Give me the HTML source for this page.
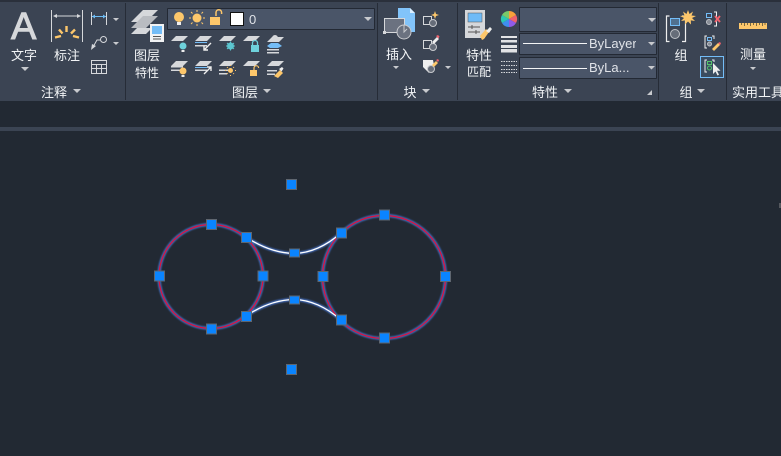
<!DOCTYPE html>
<html><head><meta charset="utf-8">
<style>
html,body{margin:0;padding:0;background:#222933;}
#p{position:relative;width:781px;height:456px;overflow:hidden;background:#222933;font-family:"Liberation Sans","Noto Sans CJK SC",sans-serif;color:#f0f2f5;}
.a{position:absolute;}
.t{position:absolute;font-size:13px;line-height:15px;white-space:nowrap;color:#f2f4f6;}
.c{text-align:center;transform:translateX(-50%);}
.s{position:absolute;width:1px;background:#262c37;}
.dd{position:absolute;background:#4a5568;border:1px solid #232934;box-sizing:border-box;border-radius:1px;}
svg{position:absolute;left:0;top:0;}
</style></head><body><div id="p">
<div class="a" style="left:0;top:0;width:781px;height:2px;background:#2a303b"></div>
<div class="a" style="left:0;top:2px;width:781px;height:99px;background:#3b4453"></div>
<div class="a" style="left:0;top:127px;width:781px;height:4px;background:#3b4453"></div>
<div class="s" style="left:125px;top:3px;height:97px"></div>
<div class="s" style="left:377px;top:3px;height:97px"></div>
<div class="s" style="left:457px;top:3px;height:97px"></div>
<div class="s" style="left:658px;top:3px;height:97px"></div>
<div class="s" style="left:726px;top:3px;height:97px"></div>

<div class="dd" style="left:167px;top:8px;width:208px;height:22px"></div>
<div class="dd" style="left:519px;top:7px;width:138px;height:25px"></div>
<div class="dd" style="left:519px;top:33px;width:138px;height:22px"></div>
<div class="dd" style="left:519px;top:57px;width:138px;height:22px"></div>

<svg width="781" height="456" viewBox="0 0 781 456">
<defs><filter id="b" x="-10%" y="-10%" width="120%" height="120%"><feGaussianBlur stdDeviation="0.7"/></filter></defs>
<!-- annotation icons -->
<g stroke="#d6d8db" stroke-width="1" fill="none"><path d="M51.500 10V42M82.500 10V42M54 16H80"/></g>
<path d="M53 16l4-2v4zM81 16l-4-2v4z" fill="#d6d8db"/>
<g stroke="#fdc76b" stroke-width="2.400" fill="none"><path d="M66.500 26V32M59 29.500L62.500 33.500M75 29.500L71 33.500M55 37.500L61 36M79 37.500L73 36"/></g>
<path d="M91.500 12V25M106.500 12V25" stroke="#d6d8db" fill="none"/><path d="M92 16.500H106" stroke="#6dbdf5" stroke-width="1"/>
<path d="M92 16.500l3-2v4zM106 16.500l-3-2v4z" fill="#6dbdf5"/>
<circle cx="103.500" cy="39.500" r="3" fill="none" stroke="#d6d8db"/><path d="M100 40h-3l-4 7" fill="none" stroke="#d6d8db"/><path d="M91 50l1-6 4 2z" fill="#d6d8db"/>
<path d="M91.500 60.500h15v13h-15zM91.500 64.500h15M91.500 68.500h15M96.500 64.500v9M101.500 64.500v9" fill="none" stroke="#d6d8db"/>
<g fill="#c8cace"><path d="M113 18h6l-3 3zM113 42h6l-3 3zM21 67h8l-4 4zM73 89h8l-4 4z"/></g>
<g fill="#c8cace"><path d="M263 89h8l-4 4zM422 89h8l-4 4zM564 89h8l-4 4zM697 89h8l-4 4zM393 66h6l-3 3zM364 17h8l-4 4zM445 66h6l-3 3zM750 67h6l-3 3zM648 18h8l-4 4zM648 42h7l-3.500 3.500zM648 66h7l-3.500 3.500z"/></g>
<path d="M647 95l5-5v5z" fill="#c8cace"/>
<!-- layer props -->
<g fill="#d6d8db"><path d="M131 22L143 10H158L146 22z"/><path d="M131 28L143 16H158L146 28z" fill="#b9bcc1" /><path d="M131 34L137 28H152L146 34z"/></g>
<rect x="150" y="24" width="14" height="18" fill="#f2f3f4"/><rect x="152" y="26" width="10" height="8" fill="#74bdf7"/>
<path d="M153 36.500h8M153 39h8" stroke="#555" fill="none"/>
<!-- layer combo row -->
<circle cx="179" cy="17" r="5" fill="#fdc76b"/><rect x="177" y="22" width="4" height="3" fill="#eee"/>
<circle cx="197" cy="18" r="4.500" fill="#fdc76b"/><path d="M197 10v2M197 24v2M189 18h2M203 18h2M191 12l1.500 1.500M203 12l-1.500 1.500M191 24l1.500-1.500M203 24l-1.500-1.500" stroke="#fdc76b" fill="none"/>
<rect x="210" y="17" width="10" height="8" fill="#fdc76b"/><path d="M216 16v-3.500a2.800 2.800 0 0 1 5.600 0V14" fill="none" stroke="#fdc76b" stroke-width="1.500"/>
<rect x="230.500" y="12.500" width="13" height="13" fill="#fff" stroke="#111"/>
<!-- layer rows -->
<g fill="#d6d8db">
<path d="M171 41l5-5h12l-5 5z"/><path d="M243 41l5-5h12l-5 5zM219 41l5-5h12l-5 5zM171 66l5-5h12l-5 5zM195 41l5-5h12l-5 5zM219 66l5-5h12l-5 5zM243 66l5-5h12l-5 5zM195 66l5-5h12l-5 5zM267 42l5-5h12l-5 5zM267 66l5-5h12l-5 5z"/>
<path d="M171 66h12v1.500h-12zM171 69.500h9v1.500h-9z"/>
<path d="M195 45h12v1.500h-12zM195 69.500h12v1.500h-12z"/>
<path d="M219 69.500h10v1.500h-10zM219 73h8v1.500h-8z"/>
<path d="M267 49h12v1.500h-12zM267 52h12v1.500h-12zM267 70h10v1.500h-10zM267 73.500h8v1.500h-8z"/>
</g>
<path d="M195 42.500h12M195 67.500h12" stroke="#74bdf7" fill="none"/>
<path d="M267 46l4-3h7l4 3-4 2h-8z" fill="#74bdf7"/>
<circle cx="275" cy="38" r="3" fill="#d6d8db"/>
<circle cx="183" cy="46" r="3.500" fill="#6ed2dc"/><rect x="181.500" y="50" width="3" height="2" fill="#eee"/>
<path d="M211 43l-7 7M204 46v4h4" stroke="#eee" stroke-width="1.400" fill="none"/>
<circle cx="230.500" cy="46" r="3.500" fill="#5cc6d0"/><path d="M226 46h9M230.500 41.500v9M227 43l7 6M234 43l-7 6" stroke="#5cc6d0" fill="none"/>
<rect x="251" y="45" width="8" height="7" fill="#6ed2dc"/><path d="M252.500 45v-2a2.500 2.500 0 0 1 5 0v2" fill="none" stroke="#6ed2dc" stroke-width="1.300"/>
<circle cx="183" cy="71" r="3.500" fill="#fdc76b"/><rect x="181.500" y="75" width="3" height="2" fill="#eee"/>
<path d="M204 74l7-7M207 67h4v4" stroke="#eee" stroke-width="1.400" fill="none"/>
<circle cx="230.500" cy="70.500" r="2.500" fill="#fdc76b"/><path d="M230.500 65v1M230.500 75v1M225 70.500h1M235 70.500h1M227 67l.8.800M234 67l-.8.800M227 74l.8-.8M234 74l-.8-.8" stroke="#fdc76b" fill="none"/>
<rect x="250" y="70" width="7" height="6" fill="#fdc76b"/><path d="M254 70v-2a2.300 2.300 0 0 1 4.600 0" fill="none" stroke="#fdc76b" stroke-width="1.200"/>
<path d="M274 76l6-6 3 3-5 5z" fill="#fdc76b"/><path d="M279 69l3-2 1.500 1.500-2 3z" fill="#eee"/>
<!-- insert -->
<path d="M398 8h12l5 5v19h-17z" fill="#82c4fa"/><path d="M410 8l5 5h-5z" fill="#dcefff"/>
<path d="M384.500 18.500h20v14h-20z" fill="#6b7280" stroke="#d6d8db"/>
<circle cx="404" cy="32" r="7" fill="#6b7280" stroke="#c8cace"/><rect x="383" y="31" width="3" height="3" fill="#d6d8db"/>
<path d="M407 29l-3 3V25" stroke="#c8cace" fill="none"/>
<path d="M423.500 16.500h8v8h-8z" fill="none" stroke="#d6d8db"/><circle cx="433" cy="23" r="3.500" fill="#666d79" stroke="#c8cace"/>
<path d="M434 14l1-3 1 3 3 1-3 1-1 3-1-3-3-1z" fill="#fdc76b"/>
<path d="M423.500 40.500h8v8h-8z" fill="none" stroke="#d6d8db"/><circle cx="433" cy="47" r="3.500" fill="#666d79" stroke="#c8cace"/>
<path d="M432 42l5-5 2 2-5 5z" fill="#eee"/><path d="M436 36l2-1 1.500 1.500-1 2z" fill="#f0616d"/>
<path d="M423 60h10l1 5-5 8-6-6z" fill="#eee"/><circle cx="431" cy="69" r="3.500" fill="#666d79" stroke="#c8cace"/>
<path d="M432 65l4-4 2 2-4 4z" fill="#fdc76b"/><path d="M436 60l2-1 1 1.500-1 1.500z" fill="#f0616d"/>
<!-- match props -->
<rect x="465" y="10" width="20" height="28" fill="#d6d8db"/><rect x="468" y="13" width="14" height="9" fill="#6fbbf7" stroke="#555" stroke-width=".5"/>
<path d="M468 27h12M468 32h12M472 25v4M476 30v4" stroke="#555" fill="none"/>
<path d="M480 36l6-7 3 3-5 7 -2 1z" fill="#fdc76b"/><path d="M486 31l4-4 2 2-3 4z" fill="#eee"/>
<!-- color wheel -->
<path d="M509 19L509 11A8 8 0 0 1 516 15z" fill="#f9a13a"/><path d="M509 19L516 15A8 8 0 0 1 516 23z" fill="#f0616d"/><path d="M509 19L516 23A8 8 0 0 1 509 27z" fill="#8f5be8"/><path d="M509 19L509 27A8 8 0 0 1 502 23z" fill="#3f8ef0"/><path d="M509 19L502 23A8 8 0 0 1 502 15z" fill="#2cc7b5"/><path d="M509 19L502 15A8 8 0 0 1 509 11z" fill="#79c96a"/>
<g fill="#e2e3e5"><rect x="501" y="36" width="16" height="2"/><rect x="501" y="40" width="16" height="2.500"/><rect x="501" y="45" width="16" height="3"/><rect x="501" y="49" width="16" height="3.500"/></g>
<g stroke="#d6d8db" fill="none" stroke-dasharray="1.500 1"><path d="M501 61.500h16M501 65.500h16M501 69.500h16M501 72.500h16"/></g>
<path d="M523 43.500h64M523 68.500h64" stroke="#f4f5f6" stroke-width="1"/>
<!-- group -->
<path d="M669.500 16h-3v25.500h3M682 16h3.500v25.500H682" fill="none" stroke="#eee" stroke-width="1.200"/>
<rect x="670.500" y="18.500" width="9" height="7" fill="#50708f" stroke="#74bdf7"/>
<circle cx="675" cy="34" r="4.500" fill="#666d79" stroke="#bfc2c7"/>
<path d="M688 10l1.500 4 3.500-2.500-1.500 4 4.500.500-4 2 3 3-4.200-.6.200 4.100-3-3-3 3 .2-4.100-4.200.6 3-3-4-2 4.500-.500-1.500-4 3.500 2.500z" fill="#fdc76b"/>
<rect x="706.500" y="13.500" width="5" height="4" fill="none" stroke="#74bdf7"/><circle cx="709" cy="22" r="2.500" fill="#888d96" stroke="#bfc2c7"/>
<path d="M714 12h2.500v14H714" fill="none" stroke="#eee"/><path d="M715 16l5 6M720 16l-5 6" stroke="#f0616d" stroke-width="1.800" fill="none"/>
<path d="M707 36h-2v12h2M712 36h2v3" fill="none" stroke="#eee"/><rect x="707.500" y="37.500" width="4" height="3" fill="none" stroke="#74bdf7"/><circle cx="709.500" cy="44" r="2" fill="#888d96" stroke="#bfc2c7"/>
<path d="M712 49l6-6 2 2-6 6z" fill="#fdc76b"/><path d="M718 43l2-1 1 1.500-1 1.500z" fill="#f0616d"/>
<rect x="700.500" y="56.500" width="23" height="21" fill="#3a4c60" stroke="#74bdf7"/>
<path d="M707 60h-2v12h2M712 60h2v2" fill="none" stroke="#eee"/><rect x="707.500" y="61.500" width="4" height="3" fill="none" stroke="#55c46b"/><circle cx="709.500" cy="68" r="2" fill="none" stroke="#55c46b"/>
<path d="M713 63v11l2.500-2.500 2 4 1.500-.8-2-4h3.500z" fill="#eee"/>
<!-- measure -->
<rect x="739" y="23" width="28" height="6" fill="#fdc76b"/><path d="M741.500 23v2M744.500 23v3M747.500 23v2M750.500 23v3M753.500 23v2M756.500 23v3M759.500 23v2M762.500 23v3M765 23v2" stroke="#7a6a42" fill="none"/>
<path d="M780 203v5" stroke="#888" fill="none"/>

<!-- drawing: glow + lines -->
<g fill="none">
<g stroke="#3f68b5" stroke-width="3.400" filter="url(#b)">
<circle cx="211" cy="276.500" r="52"/><circle cx="384" cy="277" r="61.500"/>
<path d="M246 237Q270 253 294 253.500Q318 253 341 233M246 316Q270 300 294 299.500Q318 300 341 320"/>
</g>
<circle cx="211" cy="276.500" r="52" stroke="#e0103c" stroke-width="1.200"/>
<circle cx="384" cy="277" r="61.500" stroke="#e0103c" stroke-width="1.200"/>
<path d="M246 237Q270 253 294 253.500Q318 253 341 233M246 316Q270 300 294 299.500Q318 300 341 320" stroke="#fff" stroke-width="1.300"/>
</g>
<g fill="#0a84ff" stroke="#5f6670" stroke-width="1">
<rect x="286.500" y="179.500" width="10" height="10"/>
<rect x="286.500" y="364.500" width="10" height="10"/>
<rect x="206.500" y="219.500" width="10" height="10"/>
<rect x="206.500" y="324" width="10" height="10"/>
<rect x="154.500" y="271" width="10" height="10"/>
<rect x="258" y="271" width="10" height="10"/>
<rect x="241.500" y="232.500" width="10" height="10"/>
<rect x="241.500" y="311.500" width="10" height="10"/>
<rect x="289.500" y="249" width="10" height="8"/>
<rect x="289.500" y="296" width="10" height="8"/>
<rect x="336.500" y="228" width="10" height="10"/>
<rect x="336.500" y="315" width="10" height="10"/>
<rect x="318" y="271.500" width="10" height="10"/>
<rect x="440.500" y="271.500" width="10" height="10"/>
<rect x="379.500" y="210" width="10" height="10"/>
<rect x="379.500" y="333" width="10" height="10"/>
</g>
</svg>

<div class="t" style="left:11px;top:8px;font-size:38px;line-height:38px;color:#d6d8db;-webkit-text-stroke:1px #d6d8db">A</div>
<div class="t c" style="left:24px;top:48px">文字</div>
<div class="t c" style="left:67px;top:48px">标注</div>
<div class="t c" style="left:54px;top:85px">注释</div>
<div class="t c" style="left:147px;top:48px">图层</div>
<div class="t c" style="left:147px;top:66px;font-size:12px">特性</div>
<div class="t c" style="left:245px;top:85px">图层</div>
<div class="t" style="left:249px;top:12px;color:#e0e3e8;font-size:13px">0</div>
<div class="t c" style="left:399px;top:47px">插入</div>
<div class="t c" style="left:410px;top:85px">块</div>
<div class="t c" style="left:479px;top:48px">特性</div>
<div class="t c" style="left:479px;top:65px;font-size:12px">匹配</div>
<div class="t c" style="left:545px;top:85px">特性</div>
<div class="t" style="left:589px;top:36px;color:#e0e3e8;font-size:13px;width:47px;overflow:hidden">ByLayer</div>
<div class="t" style="left:589px;top:60px;color:#e0e3e8;font-size:13px">ByLa...</div>
<div class="t c" style="left:681px;top:48px">组</div>
<div class="t c" style="left:686px;top:85px">组</div>
<div class="t c" style="left:753px;top:47px">测量</div>
<div class="t" style="left:732px;top:85px">实用工具</div>
</div></body></html>
